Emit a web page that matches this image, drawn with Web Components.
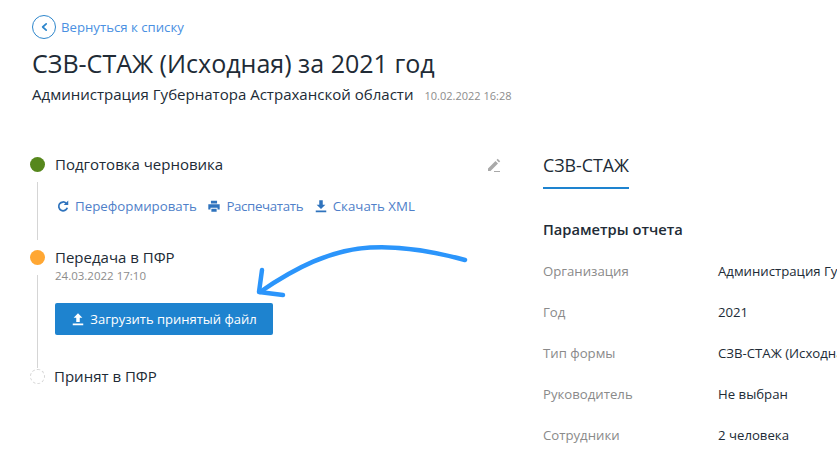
<!DOCTYPE html>
<html>
<head>
<meta charset="utf-8">
<style>
  html, body { margin: 0; padding: 0; background: #fff; overflow: hidden; height: 456px; }
  body { font-family: "Open Sans", "Noto Sans", sans-serif; color: #212b36; }
</style>
</head>
<body>
<report-page></report-page>

<script>
const ICONS = {
  back: `<path d="M10.5 4.5 L6.5 8 L10.5 11.5" fill="none" stroke="currentColor" stroke-width="2" stroke-linecap="round" stroke-linejoin="round"/>`,
  refresh: `<path d="M11.7 4.9A5 5 0 1 0 12.9 10" fill="none" stroke="currentColor" stroke-width="2"/><path d="M8.8 6.8 L14 6.8 L14 1.6Z" fill="currentColor"/>`,
  print: `<path d="M4.5 2h7v3h-7z M1.5 6h13v6h-2.5v-2h-8v2h-2.5z M5 11h6v3.5h-6z" fill="currentColor"/>`,
  download: `<path d="M6 1.5h4v5h3L8 11.5 3 6.5h3z M2 13h12v2H2z" fill="currentColor"/>`,
  upload: `<path d="M8 1.5l5 5h-3v5H6v-5H3z M2 13h12v2H2z" fill="currentColor"/>`
}

function icon(name, size = 16) {
  return `<svg width="${size}" height="${size}" viewBox="0 0 16 16">${ICONS[name]}</svg>`
}

class BackLink extends HTMLElement {
  constructor() {
    super()
    this.attachShadow({mode:'open'}).innerHTML = `
    <style>
      :host { display: flex; align-items: center; gap: 5px; color: #4a90e2; font-size: 13.2px; height: 24px; }
      .circle { width: 24px; height: 24px; border: 1.5px solid #2d86cc; border-radius: 50%; color: #2d86cc;
        display: flex; align-items: center; justify-content: center; box-sizing: border-box; }
    </style>
    <span class="circle">${icon('back', 14)}</span><slot></slot>`
  }
}
customElements.define('back-link', BackLink)

class ActionLink extends HTMLElement {
  constructor() {
    super()
    this.attachShadow({mode:'open'}).innerHTML = `
    <style>
      :host { display: inline-flex; align-items: center; gap: 5px; color: #4f7fc9; font-size: 13.3px; white-space: nowrap; }
      svg { color: #2f73bd; display: block; }
    </style>
    ${icon(this.getAttribute('icon'), 14)}<slot></slot>`
  }
}
customElements.define('action-link', ActionLink)

class TimelineStep extends HTMLElement {
  constructor() {
    super()
    const state = this.getAttribute('state')
    const tail = this.getAttribute('tail') || '0'
    this.attachShadow({mode:'open'}).innerHTML = `
    <style>
      :host { display: grid; grid-template-columns: 25px 1fr; position: relative; font-size: 15px; color: #212b36; }
      .rail { position: relative; display: flex; flex-direction: column; align-items: center; width: 15px; }
      .dot { width: 15px; height: 15px; border-radius: 50%; box-sizing: border-box; flex: none; margin-top: 3px; }
      .done { background: #56871c; }
      .active { background: #ffa733; }
      .todo { border: 1px dashed #d5d5d5; }
      .line { width: 1px; background: #d5d5d5; flex: 1; margin-top: 10px; margin-bottom: ${tail}px; }
      .body { min-width: 0; }
      .title { display: flex; justify-content: space-between; align-items: center; line-height: 21px; }
      ::slotted([slot=date]) { display: block; color: #8c8c8c; font-size: 11.5px; line-height: 14px; margin-top: 1px; }
    </style>
    <div class="rail"><span class="dot ${state}"></span>${this.hasAttribute('last') ? '' : '<span class="line"></span>'}</div>
    <div class="body">
      <div class="title"><span><slot name="title"></slot></span><slot name="tool"></slot></div>
      <slot name="date"></slot>
      <slot></slot>
    </div>`
  }
}
customElements.define('timeline-step', TimelineStep)

class ParamRow extends HTMLElement {
  constructor() {
    super()
    this.attachShadow({mode:'open'}).innerHTML = `
    <style>
      :host { display: grid; grid-template-columns: 175px 1fr; font-size: 13.2px; height: 41px; white-space: nowrap; color: #212b36; }
      .k { color: #8a8a8a; }
    </style>
    <span class="k">${this.getAttribute('label')}</span><span><slot></slot></span>`
  }
}
customElements.define('param-row', ParamRow)

class ReportPage extends HTMLElement {
  constructor() {
    super()
    this.attachShadow({mode:'open'}).innerHTML = `
    <style>
      :host { display: block; position: relative; width: 837px; height: 456px; overflow: hidden; box-sizing: border-box; padding: 15px 0 0 32px; }
      h1 { font-size: 25.06px; font-weight: 400; margin: 8px 0 0; line-height: 32px; color: #212b36; white-space: nowrap; }
      .org { display: flex; align-items: baseline; gap: 11px; font-size: 15.04px; line-height: 20px; margin-top: 5px; white-space: nowrap; }
      .org small { font-size: 11px; color: #8c8c8c; }
      .columns { display: grid; grid-template-columns: 511px 1fr; margin-top: 48px; }
      .left { width: 471px; margin-left: -2px; }
      .actions { display: flex; gap: 10.5px; padding: 22px 0 32px 0; margin-left: 1px; }
      .print { letter-spacing: -.35px; }
      .btn { display: inline-flex; align-items: center; justify-content: center; gap: 5px; width: 218px; height: 32px; margin-top: 20px;
        margin-bottom: 31px; background: #1e83cf; color: #fff; font-size: 13px; font-weight: 500; border-radius: 2px; }
      .btn svg { display: block; }
      .pencil { color: #a9a9a9; display: block; }
      .tab { display: inline-block; font-size: 17.8px; line-height: 24px; margin-top: -1px; padding: 0 0 10px; border-bottom: 2px solid #1e83cf; color: #212b36; }
      h2 { font-size: 14.7px; font-weight: 600; margin: 30px 0 23px; line-height: 20px; color: #212b36; }
      .shift { margin-left: -1px; }
      .arrow { position: absolute; left: 0; top: 0; pointer-events: none; }
    </style>
    <back-link>Вернуться к списку</back-link>
    <h1>СЗВ-СТАЖ (Исходная) за 2021 год</h1>
    <div class="org"><span>Администрация Губернатора Астраханской области</span><small>10.02.2022 16:28</small></div>
    <div class="columns">
      <div class="left">
        <timeline-step state="done" tail="7">
          <span slot="title">Подготовка черновика</span>
          <svg slot="tool" class="pencil" width="14" height="14" viewBox="0 0 14 14"><path d="M1 10.5 L8.5 3 L11 5.5 L3.5 13 L1 13Z M9.5 2 L10.7 .8 L13.2 3.3 L12 4.5Z" fill="currentColor"/><path d="M7 13h6v1H7z" fill="currentColor"/></svg>
          <div class="actions">
            <action-link icon="refresh">Переформировать</action-link>
            <action-link icon="print" class="print">Распечатать</action-link>
            <action-link icon="download">Скачать XML</action-link>
          </div>
        </timeline-step>
        <timeline-step state="active" tail="-2">
          <span slot="title">Передача в ПФР</span>
          <span slot="date">24.03.2022 17:10</span>
          <div class="btn">${icon('upload', 14)}<span>Загрузить принятый файл</span></div>
        </timeline-step>
        <timeline-step state="todo" last>
          <span slot="title" class="shift">Принят в ПФР</span>
        </timeline-step>
      </div>
      <div class="right">
        <div class="tab">СЗВ-СТАЖ</div>
        <h2>Параметры отчета</h2>
        <param-row label="Организация">Администрация Губернатора Астраханской области</param-row>
        <param-row label="Год">2021</param-row>
        <param-row label="Тип формы">СЗВ-СТАЖ (Исходная)</param-row>
        <param-row label="Руководитель">Не выбран</param-row>
        <param-row label="Сотрудники">2 человека</param-row>
      </div>
    </div>
    <svg class="arrow" width="837" height="456" viewBox="0 0 837 456" fill="none" stroke="#2b95fb" stroke-width="4.5" stroke-linecap="round" stroke-linejoin="round">
      <path d="M465 260 C425 249 395 246 370 247.500 C330 250 295 268 260 292"/>
      <path d="M262 270 L259 292 L283 295"/>
    </svg>`
  }
}
customElements.define('report-page', ReportPage)
</script>
</body>
</html>
